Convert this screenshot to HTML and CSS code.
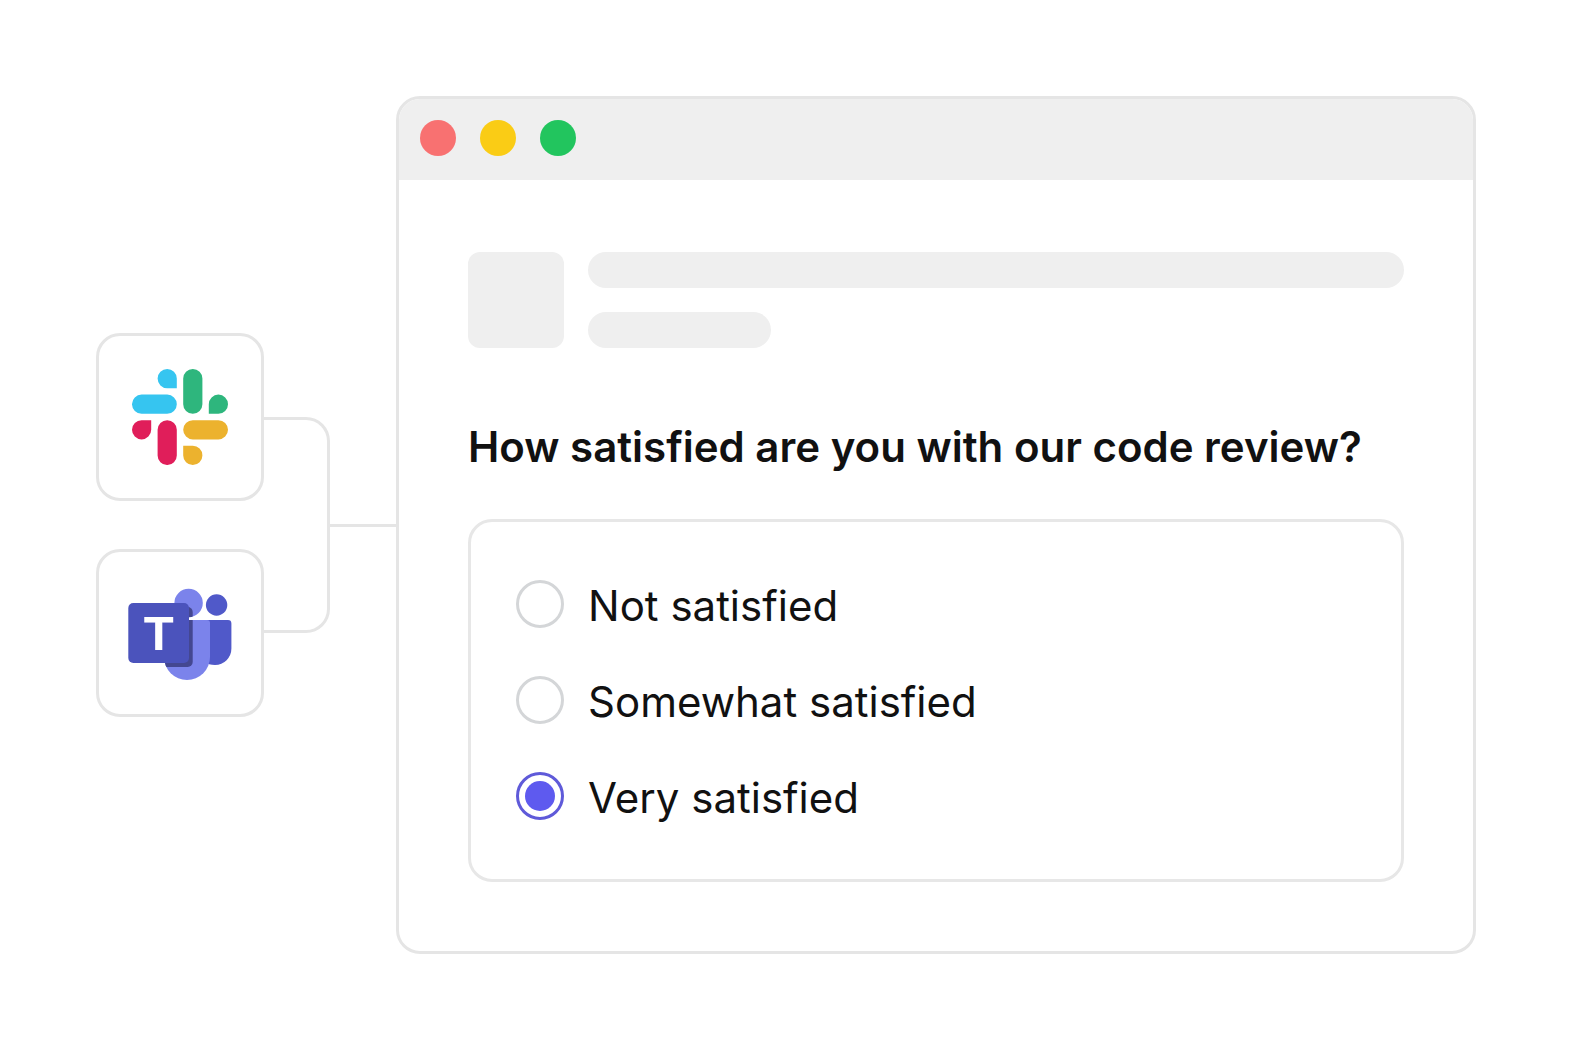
FILE: index.html
```html
<!DOCTYPE html>
<html lang="en">
<head>
    <meta charset="UTF-8">
    <meta name="viewport" content="width=device-width, initial-scale=1.0">
    <title>Code review survey</title>
    <link rel="stylesheet" href="styles.css">
</head>
<body>
    <main class="scene">
        <div class="apps">
            <div class="tile">
                <svg class="slack" viewBox="0 0 96 96" role="img" aria-label="Slack">
                    <path fill="#36c5f0" d="M35.2 0a9.6 9.6 0 1 0 0 19.2h9.6V9.6A9.6 9.6 0 0 0 35.2 0zM9.6 25.6a9.6 9.6 0 1 0 0 19.2h25.6a9.6 9.6 0 1 0 0-19.2z"/>
                    <path fill="#2eb67d" d="M60.8 0a9.6 9.6 0 0 0-9.6 9.6v25.6a9.6 9.6 0 1 0 19.2 0V9.6A9.6 9.6 0 0 0 60.8 0zM86.4 25.6a9.6 9.6 0 0 0-9.6 9.6v9.6h9.6a9.6 9.6 0 1 0 0-19.2z"/>
                    <path fill="#e01e5a" d="M9.6 51.2a9.6 9.6 0 1 0 9.6 9.6v-9.6zM35.2 51.2a9.6 9.6 0 0 0-9.6 9.6v25.6a9.6 9.6 0 1 0 19.2 0V60.8a9.6 9.6 0 0 0-9.6-9.6z"/>
                    <path fill="#ecb22e" d="M60.8 51.2a9.6 9.6 0 1 0 0 19.2h25.6a9.6 9.6 0 1 0 0-19.2zM51.2 76.8v9.6a9.6 9.6 0 1 0 9.6-9.6z"/>
                </svg>
            </div>
            <div class="tile">
                <svg class="teams" viewBox="0 -2 104 94" role="img" aria-label="Teams">
                    <defs>
                        <clipPath id="people">
                            <circle cx="60.6" cy="15" r="14.2"/>
                            <path d="M36 32h43a3 3 0 0 1 3 3v34a23 23 0 0 1-46 0z"/>
                        </clipPath>
                    </defs>
                    <circle fill="#5059c9" cx="88.6" cy="17" r="10.7"/>
                    <path fill="#5059c9" d="M76 32h24a3.4 3.4 0 0 1 3.4 3.4v25.2A16.4 16.4 0 0 1 87 77c-4 0-8-1-11-3z"/>
                    <circle fill="#7b83eb" cx="60.6" cy="15" r="14.2"/>
                    <path fill="#7b83eb" d="M36 32h43a3 3 0 0 1 3 3v34a23 23 0 0 1-46 0z"/>
                    <rect fill="#444791" clip-path="url(#people)" x="4" y="19" width="60.7" height="60" rx="5"/>
                    <rect fill="#4b53bc" x="0.3" y="15" width="60.7" height="60" rx="5"/>
                    <text class="teams-letter" x="30.7" y="62" text-anchor="middle">T</text>
                </svg>
            </div>
        </div>

        <!-- lines from the apps to the survey window -->
        <div class="bracket"></div>
        <div class="line"></div>

        <section class="window">
            <header class="titlebar">
                <span class="dot red"></span>
                <span class="dot yellow"></span>
                <span class="dot green"></span>
            </header>

            <form class="survey">
                <div class="skeleton">
                    <div class="avatar"></div>
                    <div class="bars">
                        <div class="bar"></div>
                        <div class="bar short"></div>
                    </div>
                </div>

                <h1 id="question">How satisfied are you with our code review?</h1>

                <div class="options" role="radiogroup" aria-labelledby="question">
                    <label class="option"><input type="radio" name="satisfied" value="not">Not satisfied</label>
                    <label class="option"><input type="radio" name="satisfied" value="somewhat">Somewhat satisfied</label>
                    <label class="option"><input type="radio" name="satisfied" value="very" checked>Very satisfied</label>
                </div>
            </form>
        </section>
    </main>
</body>
</html>
```

FILE: styles.css
```css
*{
    box-sizing: border-box;
}

body {
    margin: 0;
    background-color: #fff;
    color: #111;
    font-family: Inter, "Liberation Sans", sans-serif;
}

.scene {
    display: flex;
    align-items: center;
    min-height: 100vh;
    padding: 96px;
}

/* app tiles */
.apps {
    display: flex;
    flex-direction: column;
    gap: 48px;
}

.tile {
    display: flex;
    align-items: center;
    justify-content: center;
    width: 168px;
    height: 168px;
    border: 3px solid #e5e5e5;
    border-radius: 24px;
}

.slack {
    width: 96px;
    height: 96px;
}

.teams {
    width: 104px;
    height: 94px;
}

.teams-letter {
    fill: #fff;
    font-family: "Liberation Sans", Arial, sans-serif;
    font-size: 49px;
    font-weight: bold;
}

/* connector */
.bracket {
    width: 66px;
    height: 216px;
    border: 3px solid #e5e5e5;
    border-left: 0;
    border-radius: 0 24px 24px 0;
}

.line {
    width: 66px;
    height: 3px;
    background-color: #e5e5e5;
}

/* window */
.window {
    flex: 1;
    border: 3px solid #e5e5e5;
    border-radius: 24px;
    overflow: hidden;
}

.titlebar {
    display: flex;
    gap: 24px;
    padding: 21px 21px 24px;
    background-color: #efefef;
}

.dot {
    width: 36px;
    height: 36px;
    border-radius: 50%;
}

.red { background-color: #f87171; }
.yellow { background-color: #facc15; }
.green { background-color: #22c55e; }

.survey {
    padding: 72px 69px 69px;
}

.skeleton {
    display: flex;
    gap: 24px;
}

.avatar {
    width: 96px;
    height: 96px;
    border-radius: 12px;
    background-color: #efefef;
}

.bars {
    flex: 1;
    display: flex;
    flex-direction: column;
    gap: 24px;
}

.bar {
    height: 36px;
    border-radius: 18px;
    background-color: #efefef;
}

.short {
    width: 183px;
}

h1 {
    margin: 72px 0 45px;
    font-size: 42px;
    font-weight: 600;
    line-height: 54px;
}

.options {
    display: flex;
    flex-direction: column;
    gap: 45px;
    padding: 58px 45px 56px;
    border: 3px solid #e7e7e7;
    border-radius: 24px;
}

.option {
    display: flex;
    align-items: flex-start;
    gap: 24px;
    font-size: 42px;
    line-height: 51px;
    cursor: pointer;
}

.option input {
    appearance: none;
    flex: none;
    width: 48px;
    height: 48px;
    margin: 0;
    padding: 6px;
    border: 3px solid #d4d6d8;
    border-radius: 50%;
    background-clip: content-box;
    cursor: pointer;
}

.option input:checked {
    border-color: #5f5ad9;
    background-color: #5e5aef;
}
```
